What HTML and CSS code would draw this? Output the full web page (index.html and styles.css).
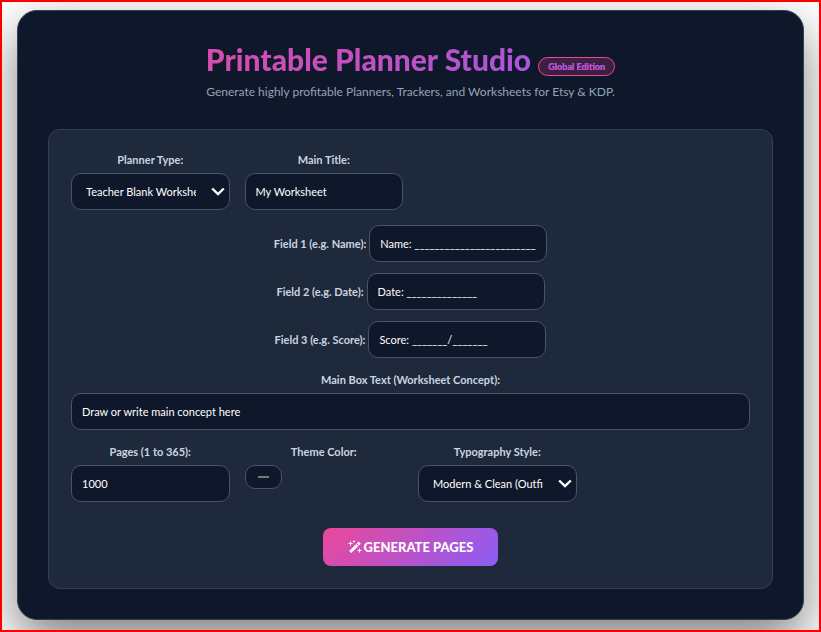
FILE: index.html
```html
<!DOCTYPE html>
<html lang="en">
<head>
  <meta charset="UTF-8">
  <meta name="viewport" content="width=device-width, initial-scale=1">
  <title>Printable Planner Studio</title>
  <link rel="stylesheet" href="styles.css">
</head>
<body>

  <main class="studio">
    <header class="studio-header">
      <h1>Printable Planner Studio <span class="badge">Global Edition</span></h1>
      <p>Generate highly profitable Planners, Trackers, and Worksheets for Etsy &amp; KDP.</p>
    </header>

    <form class="panel">
      <div class="grid">
        <div class="group">
          <label for="plannerType">Planner Type:</label>
          <div class="select-wrap">
            <select id="plannerType">
              <option>Teacher Blank Worksheet</option>
              <option>Daily Planner</option>
              <option>Habit Tracker</option>
            </select>
            <svg class="chevron" viewBox="0 0 14 9"><path d="M1.200 1.500L7 7l5.800-5.500"/></svg>
          </div>
        </div>
        <div class="group">
          <label for="mainTitle">Main Title:</label>
          <input type="text" id="mainTitle" value="My Worksheet">
        </div>
      </div>

      <div class="fields">
        <div class="field">
          <label for="field1">Field 1 (e.g. Name):</label>
          <input type="text" id="field1" value="Name: _________________________">
        </div>
        <div class="field">
          <label for="field2">Field 2 (e.g. Date):</label>
          <input type="text" id="field2" value="Date: ______________">
        </div>
        <div class="field">
          <label for="field3">Field 3 (e.g. Score):</label>
          <input type="text" id="field3" value="Score: _______/_______">
        </div>
      </div>

      <div class="group">
        <label for="boxText">Main Box Text (Worksheet Concept):</label>
        <input type="text" id="boxText" value="Draw or write main concept here">
      </div>

      <div class="grid">
        <div class="group">
          <label for="pages">Pages (1 to 365):</label>
          <input type="number" id="pages" min="1" max="365" value="1000">
        </div>
        <div class="group">
          <label for="themeColor">Theme Color:</label>
          <input type="color" id="themeColor" value="#777777">
        </div>
        <div class="group">
          <label for="fontStyle">Typography Style:</label>
          <div class="select-wrap">
            <select id="fontStyle">
              <option>Modern &amp; Clean (Outfit)</option>
              <option>Classic Serif</option>
            </select>
            <svg class="chevron" viewBox="0 0 14 9"><path d="M1.200 1.500L7 7l5.800-5.500"/></svg>
          </div>
        </div>
      </div>

      <button type="button" class="generate">
        <svg class="wand" viewBox="0 0 14 14">
          <path class="stick" d="M2.2 12L11.8 2.6"/>
          <path class="notch" d="M8.6 3.6l2 2"/>
          <path class="spark" d="M2.5 1.5v4M.5 3.5h4M11.5 8.500v4M9.500 10.500h4M6 .5v2M5 1.500h2"/>
        </svg>
        GENERATE PAGES
      </button>
    </form>
  </main>

</body>
</html>
```
FILE: styles.css
```css
* {
  box-sizing: border-box;
}
body {
  margin: 0;
  min-height: 100vh;
  padding: 8px 15px 10px;
  border: 2px solid #ff0000;
  background: #fff;
  font-family: Lato, sans-serif;
  overflow: hidden;
}
.studio {
  padding: 30px;
  border: 1px solid #334155;
  border-radius: 20px;
  background: #0f172a;
  box-shadow: 0 20px 50px rgba(0, 0, 0, 0.5);
  text-align: center;
}
.studio-header {
  margin-bottom: 28px;
}
h1 {
  margin: 0;
  font-size: 30px;
  font-weight: 900;
  line-height: 36px;
  background: linear-gradient(135deg, #ec4899, #8b5cf6);
  -webkit-background-clip: text;
  background-clip: text;
  -webkit-text-fill-color: transparent;
}
.badge {
  display: inline-block;
  padding: 3px 9px;
  border: 1px solid #ec4899;
  border-radius: 20px;
  background: rgba(236, 72, 153, 0.2);
  font-size: 9px;
  line-height: 11px;
  vertical-align: 1px;
  -webkit-text-fill-color: #b653d6;
}
.studio-header p {
  margin: 6px 0 0;
  color: #94a3b8;
  font-size: 12px;
  line-height: 18px;
}
.panel {
  display: flex;
  flex-direction: column;
  gap: 15px;
  padding: 23px 22px 22px;
  border: 1px solid #334155;
  border-radius: 12px;
  background: #1e293b;
}
.grid {
  display: grid;
  grid-template-columns: repeat(auto-fill, minmax(150px, 1fr));
  gap: 15px;
}
.group {
  display: flex;
  flex-direction: column;
  gap: 6px;
}
label {
  color: #cbd5e1;
  font-size: 11px;
  font-weight: 700;
  line-height: 14px;
}
input, select {
  width: 100%;
  height: 37px;
  padding: 10px;
  border: 1px solid #475569;
  border-radius: 10px;
  background: #0f172a;
  color: #fff;
  font-family: inherit;
  font-size: 11px;
}
input[type="number"] {
  appearance: textfield;
}
input[type="color"] {
  width: 37px;
  height: 24px;
  padding: 10px 12px;
}
input[type="color"]::-webkit-color-swatch-wrapper {
  padding: 0;
}
input[type="color"]::-webkit-color-swatch {
  border: 1px solid #777;
  border-radius: 0;
}
.select-wrap {
  display: grid;
  align-items: center;
}
.select-wrap > * {
  grid-area: 1 / 1;
}
select {
  appearance: none;
  padding: 10px 33px 10px 14px;
}
.chevron {
  justify-self: end;
  width: 14px;
  height: 9px;
  margin-right: 5px;
  fill: none;
  stroke: #fff;
  stroke-width: 2.4;
  pointer-events: none;
}
.fields {
  display: flex;
  flex-direction: column;
  gap: 11px;
}
.field {
  display: flex;
  justify-content: center;
  align-items: center;
  gap: 3px;
}
.field input {
  width: 178px;
}
.generate {
  display: flex;
  align-items: center;
  align-self: center;
  gap: 2px;
  height: 38px;
  margin-top: 11px;
  padding: 0 25px;
  border: none;
  border-radius: 8px;
  background: linear-gradient(135deg, #ec4899, #8b5cf6);
  color: #fff;
  font-family: inherit;
  font-size: 13px;
  font-weight: 900;
  cursor: pointer;
}
.wand {
  width: 14px;
  height: 14px;
  fill: none;
  stroke: #fff;
}
.stick {
  stroke-width: 3;
}
.notch {
  stroke: #c44fc0;
  stroke-width: 1;
}
.spark {
  stroke-width: 1;
}
```
